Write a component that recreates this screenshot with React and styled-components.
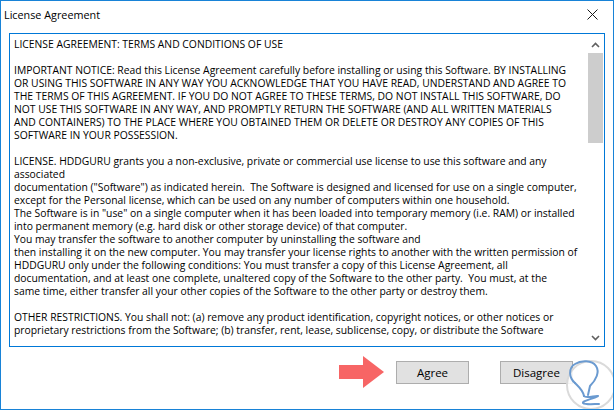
import React from "react";
import styled, { createGlobalStyle } from "styled-components";

const GlobalStyle = createGlobalStyle`
  html, body {
    margin: 0;
    padding: 0;
    background: #ffffff;
  }
  body {
    font-family: "Open Sans", "Liberation Sans", sans-serif;
  }
`;

const licenseLines = [
  "LICENSE AGREEMENT: TERMS AND CONDITIONS OF USE",
  "",
  "IMPORTANT NOTICE: Read this License Agreement carefully before installing or using this Software. BY INSTALLING",
  "OR USING THIS SOFTWARE IN ANY WAY YOU ACKNOWLEDGE THAT YOU HAVE READ, UNDERSTAND AND AGREE TO",
  "THE TERMS OF THIS AGREEMENT. IF YOU DO NOT AGREE TO THESE TERMS, DO NOT INSTALL THIS SOFTWARE, DO",
  "NOT USE THIS SOFTWARE IN ANY WAY, AND PROMPTLY RETURN THE SOFTWARE (AND ALL WRITTEN MATERIALS",
  "AND CONTAINERS) TO THE PLACE WHERE YOU OBTAINED THEM OR DELETE OR DESTROY ANY COPIES OF THIS",
  "SOFTWARE IN YOUR POSSESSION.",
  "",
  "LICENSE. HDDGURU grants you a non-exclusive, private or commercial use license to use this software and any",
  "associated",
  "documentation (\"Software\") as indicated herein.  The Software is designed and licensed for use on a single computer,",
  "except for the Personal license, which can be used on any number of computers within one household.",
  "The Software is in \"use\" on a single computer when it has been loaded into temporary memory (i.e. RAM) or installed",
  "into permanent memory (e.g. hard disk or other storage device) of that computer.",
  "You may transfer the software to another computer by uninstalling the software and",
  "then installing it on the new computer. You may transfer your license rights to another with the written permission of",
  "HDDGURU only under the following conditions: You must transfer a copy of this License Agreement, all",
  "documentation, and at least one complete, unaltered copy of the Software to the other party.  You must, at the",
  "same time, either transfer all your other copies of the Software to the other party or destroy them.",
  "",
  "OTHER RESTRICTIONS. You shall not: (a) remove any product identification, copyright notices, or other notices or",
  "proprietary restrictions from the Software; (b) transfer, rent, lease, sublicense, copy, or distribute the Software",
];

export default function App() {
  return (
    <>
      <GlobalStyle />
      <Window>
        <TitleBar>
          <Title>License Agreement</Title>
          <CloseButton aria-label="Close">
            <svg width="11" height="11" viewBox="0 0 11 11">
              <path d="M0.5 0.5 L10.5 10.5 M10.5 0.5 L0.5 10.5" stroke="#1a1a1a" strokeWidth="1" fill="none" />
            </svg>
          </CloseButton>
        </TitleBar>

        <Body>
          <TextBox>
            <LicenseText>{licenseLines.join("\n")}</LicenseText>
            <ScrollBar>
              <ScrollArrow>
                <svg width="9" height="6" viewBox="0 0 9 6">
                  <path d="M1 5 L4.5 1.5 L8 5" stroke="#606060" strokeWidth="1.6" fill="none" />
                </svg>
              </ScrollArrow>
              <ScrollTrack>
                <ScrollThumb />
              </ScrollTrack>
              <ScrollArrow>
                <svg width="9" height="6" viewBox="0 0 9 6">
                  <path d="M1 1 L4.5 4.5 L8 1" stroke="#606060" strokeWidth="1.6" fill="none" />
                </svg>
              </ScrollArrow>
            </ScrollBar>
          </TextBox>

          <Footer>
            <Pointer width="45" height="32" viewBox="0 0 45 32">
              <path d="M0 9 H24 V0 L45 16 L24 32 V23 H0 Z" fill="#f76565" />
            </Pointer>
            <Button>Agree</Button>
            <Button>Disagree</Button>
          </Footer>
        </Body>

        {/* site watermark over the corner */}
        <Watermark width="50" height="52" viewBox="0 0 50 52">
          <circle cx="25" cy="26" r="24" fill="rgba(255,255,255,0.88)" stroke="#dadada" strokeWidth="2" />
          <g stroke="#6a9ad0" strokeWidth="2" fill="none" strokeLinecap="round" strokeLinejoin="round">
            <path d="M9 24 C3 19 2 9 9 5 C15 1 26 1 30 7 C34 13 30 21 24 27 L22 36" />
            <path d="M9 24 C13 28 17 31 18 37" />
            <path d="M18 37 C20 40 30 36 32 37 C26 40 16 42 17 44 C19 46 28 45 33 45" />
          </g>
        </Watermark>
      </Window>
    </>
  );
}

const Window = styled.div`
  position: relative;
  box-sizing: border-box;
  width: 614px;
  height: 410px;
  border: 1px solid #1883d7;
  background: #ffffff;
  display: flex;
  flex-direction: column;
  overflow: hidden;
`;

const TitleBar = styled.div`
  display: flex;
  align-items: center;
  justify-content: space-between;
  height: 26px;
  padding: 0 0 0 3px;
`;

const Title = styled.span`
  font-family: "Open Sans", "Liberation Sans", sans-serif;
  font-size: 10.8px;
  color: #000000;
`;

const CloseButton = styled.div`
  width: 42px;
  height: 26px;
  display: flex;
  align-items: center;
  justify-content: center;
`;

const Body = styled.div`
  flex: 1;
  display: flex;
  flex-direction: column;
  padding: 6px 8px 0 8px;
`;

const TextBox = styled.div`
  box-sizing: border-box;
  height: 314px;
  border: 1px solid #0078d7;
  display: flex;
  background: #ffffff;
`;

const LicenseText = styled.div`
  flex: 1;
  white-space: pre;
  overflow: hidden;
  padding: 4px 0 0 4px;
  font-family: "Open Sans", "Liberation Sans", sans-serif;
  font-size: 10.35px;
  line-height: 13px;
  color: #000000;
`;

const ScrollBar = styled.div`
  width: 17px;
  display: flex;
  flex-direction: column;
  align-items: center;
`;

const ScrollArrow = styled.div`
  height: 17px;
  width: 17px;
  display: flex;
  align-items: center;
  justify-content: center;
  margin-top: 2px;
`;

const ScrollTrack = styled.div`
  flex: 1;
  width: 100%;
  display: flex;
  justify-content: center;
`;

const ScrollThumb = styled.div`
  width: 15px;
  height: 90px;
  background: #cdcdcd;
`;

const Footer = styled.div`
  display: flex;
  align-items: center;
  justify-content: flex-end;
  padding: 9px 32px 0 0;
`;

const Pointer = styled.svg`
  margin-right: 12px;
`;

const Button = styled.button`
  box-sizing: border-box;
  width: 73px;
  height: 23px;
  margin-left: 31px;
  background: #e1e1e1;
  border: 1px solid #adadad;
  font-family: "Open Sans", "Liberation Sans", sans-serif;
  font-size: 11.5px;
  color: #000000;
  padding: 0;

  &:first-of-type {
    margin-left: 0;
  }
`;

const Watermark = styled.svg`
  position: absolute;
  left: 565px;
  top: 358px;
  overflow: visible;
`;
